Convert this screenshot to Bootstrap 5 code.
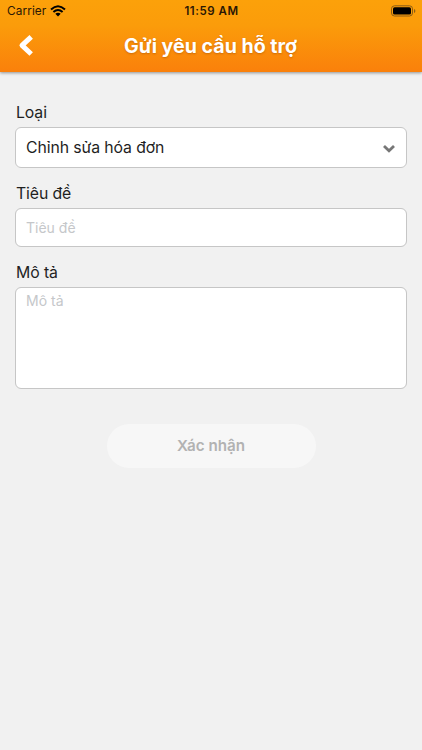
<!DOCTYPE html>
<html lang="vi">
<head>
<meta charset="utf-8">
<meta name="viewport" content="width=device-width, initial-scale=1">
<title>Gửi yêu cầu hỗ trợ</title>
<link href="https://cdn.jsdelivr.net/npm/bootstrap@5.3.0/dist/css/bootstrap.min.css" rel="stylesheet">
<style>
  body { font-family: Inter, "Liberation Sans", sans-serif; background: #f1f1f1; color: #1f1f1f; min-height: 750px; }
  .app-header { height: 71.5px; background: linear-gradient(#fca10a 0, #fb9c0a 35%, #fa800b 100%); box-shadow: 0 1px 3px rgba(0,0,0,.4); }
  .status-bar { height: 22px; padding: 0 6px 0 7px; font-size: 12px; line-height: 22px; color: #2b1704; }
  .status-side { flex: 1 1 0; }
  .carrier { font-size: 11.8px; letter-spacing: .1px; }
  .clock { font-size: 11.5px; letter-spacing: .55px; font-weight: 600; }
  .title-bar { height: 48px; padding: 0 16px; }
  .title-bar .btn { width: 20px; height: 28px; }
  .page-title { font-size: 19.6px; line-height: 28px; text-shadow: 0 1px 2px rgba(150,70,0,.45); padding-right: 21px; }
  .form-area { padding: 29.5px 15px 0; }
  .form-group { margin-bottom: 14px; }
  .form-area .form-label { font-size: 15.8px; line-height: 20px; padding: 2px 0 0 1px; letter-spacing: -.1px; }
  .form-area .form-control, .form-area .form-select { border: 1px solid #c6c6c6; border-radius: 6px; padding: 0 10px; color: #1f1f1f; background-color: #fff; }
  .form-area .form-select { height: 41px; font-size: 15.8px; letter-spacing: -.1px; line-height: 39px; background-image: none; }
  .form-area .form-control { font-size: 14px; }
  .form-control::placeholder { color: #c5c7ca; opacity: 1; }
  .form-area .title-input { height: 39px; padding-bottom: 1px; }
  .form-area .desc-input { height: 102px; padding-top: 2px; line-height: 21px; resize: none; }
  .caret { right: 11px; top: 17px; }
  .btn-submit, .btn-submit:disabled { width: 209px; height: 44px; margin-top: 35px; background: #f7f7f7; color: #b2b2b2; border: 0; opacity: 1; font-size: 15.2px; font-weight: 600; }
</style>
<script src="https://cdn.jsdelivr.net/npm/bootstrap@5.3.0/dist/js/bootstrap.bundle.min.js"></script>
</head>
<body>
<header class="app-header">
  <div class="status-bar d-flex align-items-center">
    <div class="status-side d-flex align-items-center gap-1">
      <span class="carrier">Carrier</span>
      <svg width="16" height="12" viewBox="0 0 16 12" fill="none" stroke="#000" stroke-width="2"><path d="M1 4.4Q8-2 15 4.4M3.4 7.1Q8 3 12.6 7.1"/><path d="M5.3 8.8Q8 6.6 10.7 8.8L8 11.5Z" fill="#000" stroke="none"/></svg>
    </div>
    <span class="clock">11:59 AM</span>
    <div class="status-side d-flex justify-content-end">
      <svg width="25" height="12" viewBox="0 0 25 12"><rect x=".5" y=".8" width="21" height="10.2" rx="3" fill="none" stroke="#8c5d15"/><rect x="2" y="2.3" width="18" height="7.2" rx="1.6"/><path d="M23 4v4q1.4-.6 1.4-2T23 4Z" fill="#8c5d15"/></svg>
    </div>
  </div>
  <div class="title-bar d-flex align-items-center">
    <button class="btn p-0 border-0 d-flex align-items-center" type="button" aria-label="Quay lại">
      <svg width="20" height="24" viewBox="0 0 20 24" fill="none" stroke="#fff" stroke-width="5" stroke-linejoin="round"><path d="M15.2 2.8 6 11.4 15.2 20"/></svg>
    </button>
    <h1 class="page-title flex-grow-1 text-center text-white fw-bold m-0">Gửi yêu cầu hỗ trợ</h1>
  </div>
</header>
<main>
  <form class="form-area d-flex flex-column">
    <div class="form-group">
      <label class="form-label d-block mb-1" for="type">Loại</label>
      <div class="position-relative">
        <select class="form-select" id="type"><option>Chỉnh sửa hóa đơn</option></select>
        <svg class="caret position-absolute pe-none" width="14" height="10" viewBox="0 0 14 10" fill="none" stroke="#777" stroke-width="2.8"><path d="M2 2 7 6.8 12 2"/></svg>
      </div>
    </div>
    <div class="form-group">
      <label class="form-label d-block mb-1" for="title">Tiêu đề</label>
      <input class="form-control title-input" id="title" placeholder="Tiêu đề">
    </div>
    <div>
      <label class="form-label d-block mb-1" for="desc">Mô tả</label>
      <textarea class="form-control desc-input" id="desc" placeholder="Mô tả"></textarea>
    </div>
    <button class="btn btn-submit rounded-pill align-self-center" type="submit" disabled>Xác nhận</button>
  </form>
</main>
</body>
</html>
